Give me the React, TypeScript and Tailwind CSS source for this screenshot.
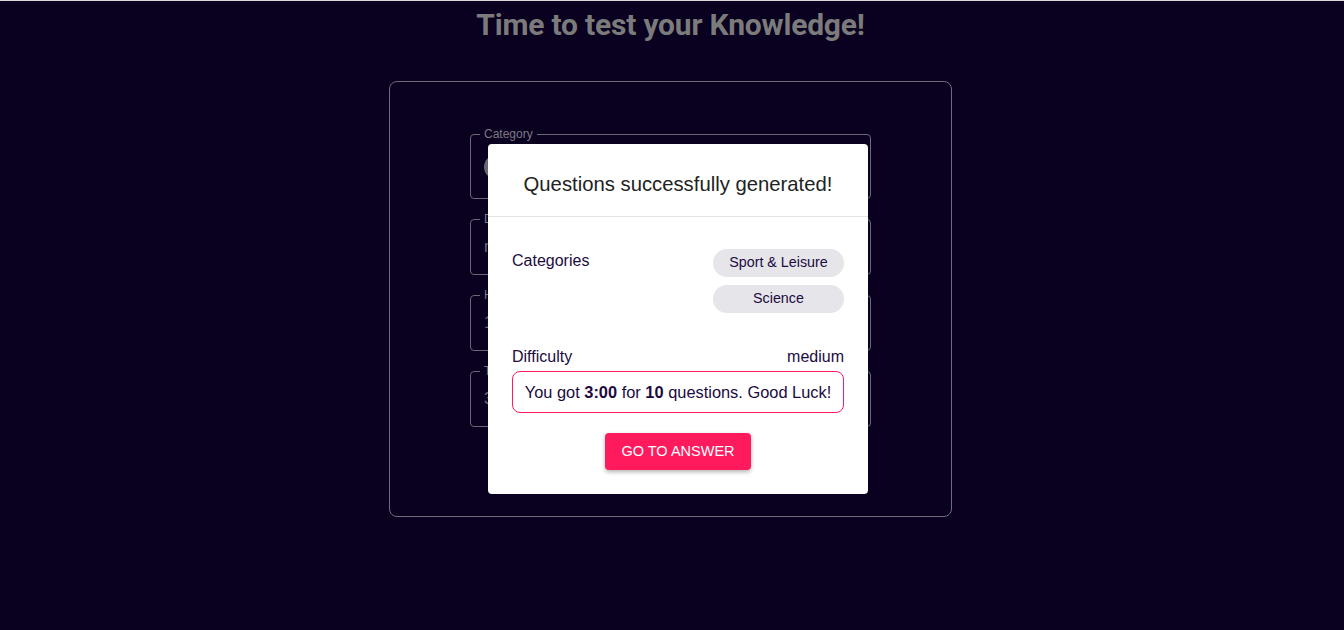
import React from "react";

function Field({ label, children, tall }: { label: string; children: React.ReactNode; tall?: boolean }) {
  return (
    <fieldset className="border border-[#6b6775] rounded-[4px] px-[9px] m-0 p-0 block">
      <legend className="px-[4px] text-[12px] leading-[12px] text-[#7d7a86]">{label}</legend>
      <div className={`${tall ? "h-[58px]" : "h-[49px]"} flex items-center px-[4px] pb-[5px]`}>{children}</div>
    </fieldset>
  );
}

export default function App() {
  return (
    <div
      className="relative w-[1344px] h-[630px] bg-[#0a001f] overflow-hidden"
      style={{ fontFamily: "'Liberation Sans', Arial, sans-serif" }}
    >
      <div className="h-px bg-[#d9d9d9]" />
      <div className="flex flex-col items-center pr-[3px]">
        <h1
          className="mt-[6px] text-[30px] leading-[36px] font-bold text-[#7b7b7b] tracking-[-0.2px]"
          style={{ fontFamily: "Roboto, 'Liberation Sans', sans-serif" }}
        >
          Time to test your Knowledge!
        </h1>
        <div className="mt-[38px] w-[563px] h-[436px] border border-[#6f6b78] rounded-[8px] px-[80px] pt-[46px]">
          <div className="flex flex-col gap-[14px]">
            <Field label="Category" tall>
              <div className="w-[24px] h-[24px] rounded-full bg-[#6a6670]" />
            </Field>
            <Field label="Difficulty">
              <span className="text-[16px] text-[#6f6b78]">medium</span>
            </Field>
            <Field label="How many questions?">
              <span className="text-[16px] text-[#6f6b78]">10</span>
            </Field>
            <Field label="Time">
              <span className="text-[16px] text-[#6f6b78]">3:00</span>
            </Field>
          </div>
        </div>
      </div>

      <div className="absolute left-[488px] top-[144px] w-[380px] h-[350px] bg-white rounded-[4px] flex flex-col">
        <div className="h-[73px] border-b border-[#e3e3e6] flex items-center justify-center pt-[8px]">
          <span className="text-[20.3px] text-[#222222]">Questions successfully generated!</span>
        </div>
        <div className="px-[24px] pt-[32px] text-[#1c0b40]">
          <div className="flex justify-between">
            <span className="text-[16px] leading-[20px] mt-[2px]">Categories</span>
            <div className="flex flex-col gap-[8px]">
              <span className="w-[131px] h-[28px] rounded-full bg-[#e5e5ea] text-[14.3px] flex items-center justify-center">
                Sport &amp; Leisure
              </span>
              <span className="w-[131px] h-[28px] rounded-full bg-[#e5e5ea] text-[14.3px] flex items-center justify-center">
                Science
              </span>
            </div>
          </div>
          <div className="flex justify-between mt-[34px] text-[16px] leading-[20px]">
            <span>Difficulty</span>
            <span>medium</span>
          </div>
          <div className="mt-[4px] h-[42px] border border-[#ff1a5e] rounded-[8px] flex items-center justify-center text-[16.4px]">
            <span>
              You got <b>3:00</b> for <b>10</b> questions. Good Luck!
            </span>
          </div>
          <div className="flex justify-center mt-[20px]">
            <button className="w-[146px] h-[37px] bg-[#ff1a5e] text-white text-[14.5px] rounded-[4px] uppercase shadow-[0_2px_4px_rgba(0,0,0,0.3)]">
              Go to answer
            </button>
          </div>
        </div>
      </div>
    </div>
  );
}
